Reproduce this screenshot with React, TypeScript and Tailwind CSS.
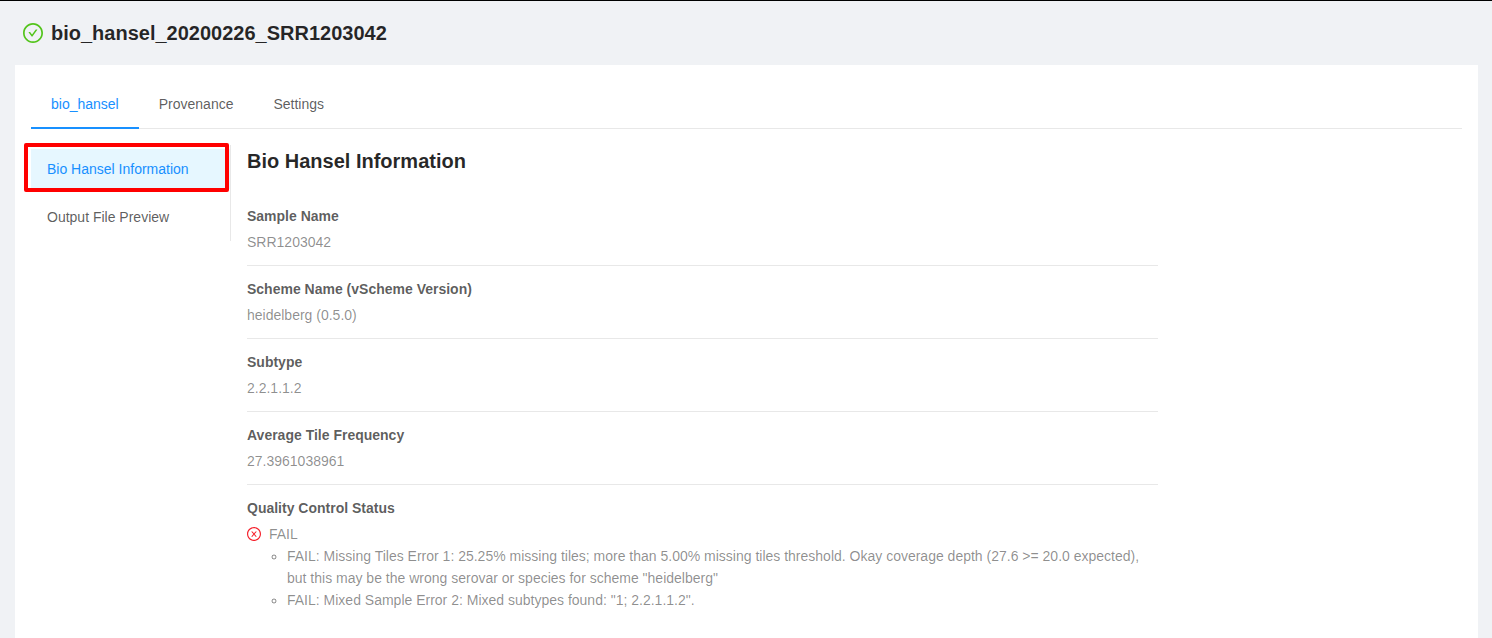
import { useState, type ReactNode } from "react";
import { AiOutlineCheckCircle } from "react-icons/ai";

const tabs = ["bio_hansel", "Provenance", "Settings"];
const sections = ["Bio Hansel Information", "Output File Preview"];

// Trims the empty margin around the icon glyphs so the circle fills its box.
const iconViewBox = "64 64 896 896";

const qualityMessages = [
  'FAIL: Missing Tiles Error 1: 25.25% missing tiles; more than 5.00% missing tiles threshold. Okay coverage depth (27.6 >= 20.0 expected), but this may be the wrong serovar or species for scheme "heidelberg"',
  'FAIL: Mixed Sample Error 2: Mixed subtypes found: "1; 2.2.1.1.2".',
];

function FailIcon() {
  return (
    <svg viewBox={iconViewBox} className="size-3.5 text-[#f5222d]" fill="currentColor" aria-hidden="true">
      <path d="M685.4 354.8c0-4.4-3.6-8-8-8l-66 .3L512 465.6l-99.3-118.4-66.1-.3c-4.4 0-8 3.5-8 8 0 1.9.7 3.7 1.9 5.2l130.1 155L340.5 670a8.32 8.32 0 0 0-1.9 5.2c0 4.4 3.6 8 8 8l66.1-.3L512 564.4l99.3 118.4 66 .3c4.4 0 8-3.5 8-8 0-1.9-.7-3.7-1.9-5.2L553.5 515l130.1-155c1.2-1.4 1.8-3.3 1.8-5.2z" />
      <path d="M512 65C264.6 65 64 265.6 64 513s200.6 448 448 448 448-200.6 448-448S759.4 65 512 65zm0 820c-205.4 0-372-166.6-372-372s166.6-372 372-372 372 166.6 372 372-166.6 372-372 372z" />
    </svg>
  );
}

const details: { label: string; value: ReactNode }[] = [
  { label: "Sample Name", value: "SRR1203042" },
  { label: "Scheme Name (vScheme Version)", value: "heidelberg (0.5.0)" },
  { label: "Subtype", value: "2.2.1.1.2" },
  { label: "Average Tile Frequency", value: "27.3961038961" },
  {
    label: "Quality Control Status",
    value: (
      <>
        <div className="flex items-center gap-2">
          <FailIcon />
          FAIL
        </div>
        <ul className="list-[circle] pl-10">
          {qualityMessages.map((message) => (
            <li key={message}>{message}</li>
          ))}
        </ul>
      </>
    ),
  },
];

function TabBar() {
  const [active, setActive] = useState(tabs[0]);
  return (
    <div role="tablist" className="flex border-b border-[#e8e8e8]">
      {tabs.map((tab) => (
        <button
          key={tab}
          type="button"
          role="tab"
          aria-selected={tab === active}
          onClick={() => setActive(tab)}
          className={
            tab === active
              ? "-mb-px h-12 cursor-pointer border-b-2 border-[#1890ff] px-5 text-[#1890ff]"
              : "-mb-px h-12 cursor-pointer border-b-2 border-transparent px-5 text-black/65"
          }
        >
          {tab}
        </button>
      ))}
    </div>
  );
}

function SideMenu() {
  const [active, setActive] = useState(sections[0]);
  return (
    <nav className="flex w-[200px] shrink-0 flex-col gap-2 border-r border-[#e8e8e8] py-1">
      {sections.map((section, index) => (
        <a
          key={section}
          href="#"
          onClick={(event) => {
            event.preventDefault();
            setActive(section);
          }}
          className={
            section === active
              ? "relative block px-4 leading-10 bg-[#e6f7ff] text-[#1890ff]"
              : "relative block px-4 leading-10 text-black/65"
          }
        >
          {section}
          {index === 0 && (
            <span className="pointer-events-none absolute -top-1.5 right-px -bottom-[3px] -left-[7px] rounded-xs border-4 border-[#ff0000]" />
          )}
        </a>
      ))}
    </nav>
  );
}

export default function App() {
  return (
    <div className="flex min-h-screen flex-col border-t border-black bg-[#f0f2f5] font-['Liberation_Sans',Arial,sans-serif] text-sm leading-[22px]">
      <header className="flex h-16 items-center gap-2 px-[23px]">
        <AiOutlineCheckCircle
          size={20}
          viewBox={iconViewBox}
          strokeWidth={0}
          className="text-[#52c41a]"
          aria-hidden="true"
        />
        <h1 className="text-xl font-bold text-black/85">bio_hansel_20200226_SRR1203042</h1>
      </header>
      <main className="mr-3.5 ml-[15px] grow bg-white p-4">
        <TabBar />
        <div className="mt-4 flex items-start gap-4">
          <SideMenu />
          <section className="grow">
            <h2 className="mb-4 text-xl leading-8 font-bold text-black/85">Bio Hansel Information</h2>
            <dl className="w-3/4 divide-y divide-[#e8e8e8]">
              {details.map(({ label, value }) => (
                <div key={label} className="py-3">
                  <dt className="mb-1 font-bold text-black/65">{label}</dt>
                  <dd className="text-black/45">{value}</dd>
                </div>
              ))}
            </dl>
          </section>
        </div>
      </main>
    </div>
  );
}
